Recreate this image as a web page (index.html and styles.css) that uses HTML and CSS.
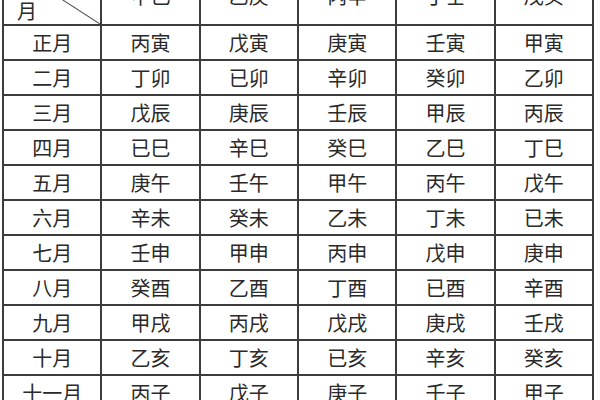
FILE: index.html
```html
<!DOCTYPE html>
<html lang="zh">
<head>
<meta charset="utf-8">
<link rel="stylesheet" href="styles.css">
</head>
<body>
<table class="pillars">
  <thead>
    <tr>
      <th class="corner"><span class="yr">年</span><span class="mo">月</span></th>
      <th>甲己</th><th>乙庚</th><th>丙辛</th><th>丁壬</th><th>戊癸</th>
    </tr>
  </thead>
  <tbody>
    <tr><td>正月</td><td>丙寅</td><td>戊寅</td><td>庚寅</td><td>壬寅</td><td>甲寅</td></tr>
    <tr><td>二月</td><td>丁卯</td><td>已卯</td><td>辛卯</td><td>癸卯</td><td>乙卯</td></tr>
    <tr><td>三月</td><td>戊辰</td><td>庚辰</td><td>壬辰</td><td>甲辰</td><td>丙辰</td></tr>
    <tr><td>四月</td><td>已巳</td><td>辛巳</td><td>癸巳</td><td>乙巳</td><td>丁巳</td></tr>
    <tr><td>五月</td><td>庚午</td><td>壬午</td><td>甲午</td><td>丙午</td><td>戊午</td></tr>
    <tr><td>六月</td><td>辛未</td><td>癸未</td><td>乙未</td><td>丁未</td><td>已未</td></tr>
    <tr><td>七月</td><td>壬申</td><td>甲申</td><td>丙申</td><td>戊申</td><td>庚申</td></tr>
    <tr><td>八月</td><td>癸酉</td><td>乙酉</td><td>丁酉</td><td>已酉</td><td>辛酉</td></tr>
    <tr><td>九月</td><td>甲戌</td><td>丙戌</td><td>戊戌</td><td>庚戌</td><td>壬戌</td></tr>
    <tr><td>十月</td><td>乙亥</td><td>丁亥</td><td>已亥</td><td>辛亥</td><td>癸亥</td></tr>
    <tr><td>十一月</td><td>丙子</td><td>戊子</td><td>庚子</td><td>壬子</td><td>甲子</td></tr>
    <tr><td>十二月</td><td>丁丑</td><td>已丑</td><td>辛丑</td><td>癸丑</td><td>乙丑</td></tr>
  </tbody>
</table>
</body>
</html>
```
FILE: styles.css
```css
html, body {
  margin: 0;
  padding: 0;
  background: #ffffff;
  overflow: hidden;
  height: 400px;
}

.pillars {
  border-collapse: collapse;
  table-layout: fixed;
  width: 592px;
  margin: -40px 0 0 2px;
  font-family: "Noto Sans CJK SC", "Noto Sans CJK JP", sans-serif;
  font-size: 20px;
  color: #2a2a2a;
}

.pillars th,
.pillars td {
  border: 2px solid #3c3c3c;
  text-align: center;
  vertical-align: middle;
  padding: 0;
  font-weight: normal;
  line-height: 1;
}

.pillars td {
  height: 33px;
}

.pillars th {
  height: 56px;
  padding-top: 6px;
}

.corner {
  position: relative;
  background: linear-gradient(to top right, transparent calc(50% - 1px), #4a4a4a 50%, transparent calc(50% + 1px));
}

.corner .yr {
  position: absolute;
  right: 14px;
  top: 6px;
}

.corner .mo {
  position: absolute;
  left: 13px;
  bottom: 3px;
}
```
